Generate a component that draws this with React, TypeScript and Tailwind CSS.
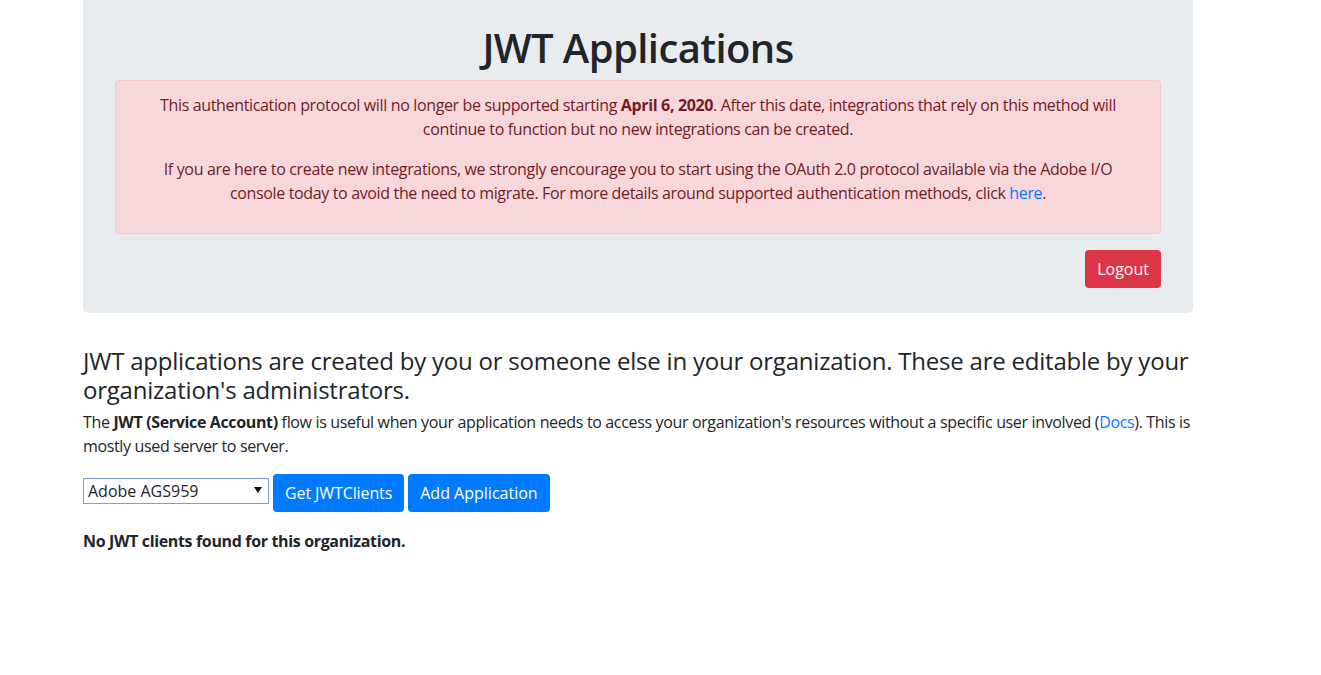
export default function App() {
  return (
    <div className="min-h-[675px] bg-white text-[#212529] font-['Open_Sans',sans-serif] text-[16px] leading-[24px] tracking-[-0.35px]">
      <div className="ml-[83px] w-[1110px]">
        <div className="bg-[#e9ecef] rounded-b-[5px] px-8 pt-6 pb-[25px]">
          <h1 className="text-center text-[40px] leading-[48px] font-semibold tracking-[-0.6px] mb-2">JWT Applications</h1>
          <div className="bg-[#f8d7da] border border-[#f5c6cb] rounded-[4px] text-[#721c24] text-center px-5 pt-3 pb-3">
            <p className="mb-4">
              This authentication protocol will no longer be supported starting <b>April 6, 2020</b>. After this date,
              integrations that rely on this method will continue to function but no new integrations can be created.
            </p>
            <p className="mb-4">
              If you are here to create new integrations, we strongly encourage you to start using the OAuth 2.0 protocol
              available via the Adobe I/O console today to avoid the need to migrate. For more details around supported
              authentication methods, click <a className="text-[#007bff]" href="#">here</a>.
            </p>
          </div>
          <div className="flex justify-end mt-4">
            <button className="bg-[#dc3545] text-white rounded-[4px] h-[38px] px-3 tracking-normal">Logout</button>
          </div>
        </div>

        <h4 className="mt-8 text-[24px] leading-[28.8px] font-medium tracking-[-0.22px] mb-[5px] pt-[2px]">
          JWT applications are created by you or someone else in your organization. These are editable by your
          organization's administrators.
        </h4>
        <p className="mb-4">
          The <b>JWT (Service Account)</b> flow is useful when your application needs to access your organization's
          resources without a specific user involved (<a className="text-[#007bff]" href="#">Docs</a>). This is mostly
          used server to server.
        </p>

        <div className="flex items-start gap-1">
          <div className="relative w-[186px] h-[26px] mt-[4px] border border-[#7b9ed6] bg-white flex items-center pl-1 text-[16px] tracking-normal">
            <span>Adobe AGS959</span>
            <svg className="absolute right-[6px] top-[8px]" width="8" height="6" viewBox="0 0 8 6">
              <path d="M0 0h8L4 6z" fill="#111" />
            </svg>
          </div>
          <button className="bg-[#007bff] text-white rounded-[4px] h-[38px] px-3 tracking-[-0.1px]">Get JWTClients</button>
          <button className="bg-[#007bff] text-white rounded-[4px] h-[38px] px-3 tracking-normal">Add Application</button>
        </div>

        <p className="mt-[17px] font-bold">No JWT clients found for this organization.</p>
      </div>
    </div>
  );
}
